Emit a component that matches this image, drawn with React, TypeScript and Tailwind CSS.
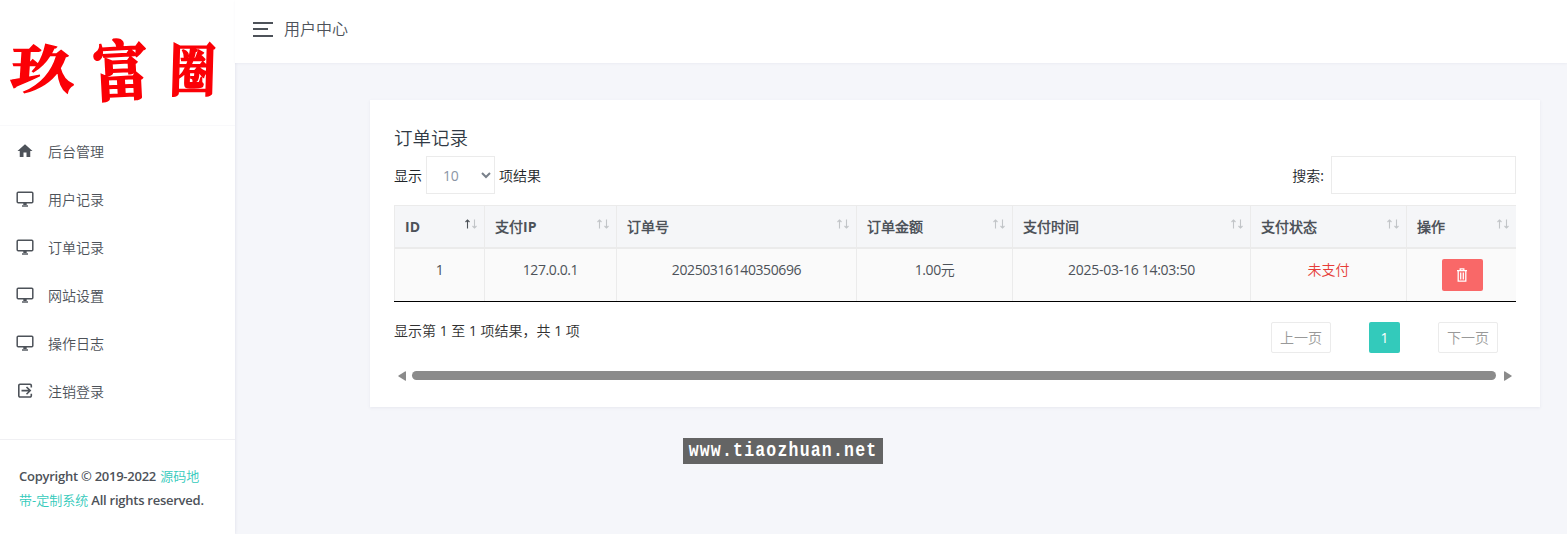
import React from "react";

type IconProps = { className?: string };

const HomeIcon = ({ className }: IconProps) => (
  <svg viewBox="0 0 24 24" className={className} fill="currentColor">
    <path d="M10 20v-6h4v6h5v-8h3L12 3 2 12h3v8z" />
  </svg>
);

const MonitorIcon = ({ className }: IconProps) => (
  <svg viewBox="0 0 18 18" className={className} fill="none" stroke="currentColor" strokeWidth="1.5">
    <rect x="1.2" y="2.2" width="15.6" height="10.6" rx="1" />
    <path d="M9 13v2" strokeWidth="3.4" />
    <path d="M6 16h6" strokeWidth="1.4" />
  </svg>
);

const LogoutIcon = ({ className }: IconProps) => (
  <svg viewBox="0 0 18 18" className={className} fill="none" stroke="currentColor" strokeWidth="1.6">
    <path d="M15.3 5.5V3.4a1.2 1.2 0 0 0-1.2-1.2H4a1.2 1.2 0 0 0-1.2 1.2v10.4A1.2 1.2 0 0 0 4 15h10.1a1.2 1.2 0 0 0 1.2-1.2v-2.1" />
    <path d="M5.5 8.6h8.7M10.5 5l3.7 3.6-3.7 3.6" />
  </svg>
);

const TrashIcon = ({ className }: IconProps) => (
  <svg viewBox="0 0 12 14" className={className} fill="none" stroke="currentColor" strokeWidth="1.3">
    <path d="M1 2.6h10M4.2 2.4V.9h3.6v1.5M2.2 2.8v10.3h7.6V2.8M4.7 4.5v7M7.3 4.5v7" />
  </svg>
);

const SortIcon = ({ active = false }: { active?: boolean }) => (
  <svg viewBox="0 0 14 10" className="mt-[-5px] h-[10px] w-[14px] text-[#4d5259]" fill="none" stroke="currentColor">
    <path d="M3.5 9.5V1M1.5 3l2-2 2 2" strokeWidth="1.1" opacity={active ? 1 : 0.3} />
    <path d="M10.5.5V9M8.5 7l2 2 2-2" strokeWidth="1.1" opacity="0.3" />
  </svg>
);

const menu = [
  { label: "后台管理", Icon: HomeIcon },
  { label: "用户记录", Icon: MonitorIcon },
  { label: "订单记录", Icon: MonitorIcon },
  { label: "网站设置", Icon: MonitorIcon },
  { label: "操作日志", Icon: MonitorIcon },
  { label: "注销登录", Icon: LogoutIcon },
];

const columns = ["ID", "支付IP", "订单号", "订单金额", "支付时间", "支付状态", "操作"];

const tableGrid = "grid grid-cols-[90px_132px_240px_156px_238px_156px_110px]";
const cell = "border-l border-[#ebebeb] flex";

export default function App() {
  return (
    <div className="flex h-[534px] w-[1567px] overflow-hidden bg-[#f5f6fa] font-['Open_Sans','Noto_Sans_CJK_SC_DemiLight','Noto_Sans_CJK_SC',sans-serif] text-[14px] leading-[21px] text-[#4d5259]">
      <aside className="flex w-[235px] shrink-0 flex-col bg-white shadow-[0_0_3px_rgba(90,90,130,0.16)]">
        <div className="flex h-[126px] items-center border-b border-[#f9f9fb] pl-[11px] pt-[6px] font-['Noto_Serif_CJK_SC','Noto_Sans_CJK_SC',serif] text-[64px] font-bold leading-[70px] text-[#fb0006] [-webkit-text-stroke:2px_#fb0006]">
          <span className="block w-[80px] -skew-x-3 scale-y-[0.8]">玖</span>
          <span className="block w-[80px] -translate-x-1 -rotate-3 scale-x-[0.86] scale-y-[1.02]">富</span>
          <span className="block w-[64px] -translate-x-[10px] -skew-x-2 scale-x-[0.72] scale-y-[0.9]">圈</span>
        </div>
        <nav className="flex flex-col pt-[1px]">
          {menu.map(({ label, Icon }) => (
            <div key={label} className="flex h-12 items-center pl-4">
              <Icon className="h-[18px] w-[18px]" />
              <span className="ml-[14px]">{label}</span>
            </div>
          ))}
        </nav>
        <div className="mt-6 border-t border-[#f0f0f3] pl-[19px] pt-6 text-[13px] font-semibold leading-6 tracking-[-0.25px]">
          <div className="whitespace-nowrap">
            Copyright © 2019-2022 <span className="ml-px font-normal tracking-normal text-[#33cabb]">源码地</span>
          </div>
          <div className="whitespace-nowrap">
            <span className="font-normal tracking-normal text-[#33cabb]">带-定制系统</span> All rights reserved.
          </div>
        </div>
      </aside>

      <div className="flex flex-1 flex-col">
        <header className="flex h-[63px] shrink-0 items-center bg-white pb-[5px] pl-[18px] shadow-[0_1px_2px_rgba(90,90,130,0.06)]">
          <div className="flex flex-col gap-[4.5px]">
            <span className="h-[2px] w-[20px] bg-[#4d5259]" />
            <span className="h-[2px] w-[15px] bg-[#4d5259]" />
            <span className="h-[2px] w-[20px] bg-[#4d5259]" />
          </div>
          <span className="ml-[11px] text-[16px]">用户中心</span>
        </header>

        <main className="pl-[135px] pt-[37px]">
          <section className="h-[307px] w-[1170px] bg-white px-6 pt-[25px] shadow-[0_1px_3px_rgba(90,90,130,0.09)]">
            <h4 className="h-[31px] text-[18.5px] leading-[25px] text-[#313944]">订单记录</h4>
            <div className="flex h-[38px] items-center justify-between text-[#212529]">
              <div className="flex items-center">
                <span>显示</span>
                <div className="ml-1 mr-1 flex h-[38px] w-[69px] items-center justify-between border border-[#ebebeb] pl-4 pr-[3px] text-[#8b95a5]">
                  <span className="tracking-[-0.2px]">10</span>
                  <svg viewBox="0 0 10 7" className="h-[7px] w-[10px]" fill="none" stroke="#79808a" strokeWidth="2">
                    <path d="m1 1 4 4 4-4" />
                  </svg>
                </div>
                <span>项结果</span>
              </div>
              <div className="flex items-center">
                <span>搜索:</span>
                <div className="ml-[7px] h-[38px] w-[185px] border border-[#ebebeb]" />
              </div>
            </div>

            <div className="mt-[11px] border-b border-black">
              <div className={`${tableGrid} h-[44px] border-b-2 border-t border-[#ebebeb] bg-[#f5f6f8] font-bold`}>
                {columns.map((c, i) => (
                  <div key={c} className={`${cell} items-center justify-between pl-[10px] pr-[6px]`}>
                    <span className="pb-px">{c}</span>
                    <SortIcon active={i === 0} />
                  </div>
                ))}
              </div>
              <div className={`${tableGrid} h-[52px] bg-[#fafafa] tracking-[-0.4px]`}>
                <div className={`${cell} justify-center pt-[10px]`}>1</div>
                <div className={`${cell} justify-center pt-[10px]`}>127.0.0.1</div>
                <div className={`${cell} justify-center pt-[10px]`}>20250316140350696</div>
                <div className={`${cell} justify-center pt-[10px]`}>1.00元</div>
                <div className={`${cell} justify-center pt-[10px] tracking-[-0.27px]`}>2025-03-16 14:03:50</div>
                <div className={`${cell} justify-center pt-[10px] tracking-normal text-[#e63c38]`}>未支付</div>
                <div className={`${cell} justify-center pl-px pt-[10px]`}>
                  <button className="flex h-8 w-[41px] items-center justify-center rounded-[2px] bg-[#f96868] text-white">
                    <TrashIcon className="h-[14px] w-[12px]" />
                  </button>
                </div>
              </div>
            </div>

            <div className="flex h-[68px] items-start justify-between text-[#313131]">
              <span className="pt-[18px]">显示第 1 至 1 项结果，共 1 项</span>
              <div className="flex pr-[18px] pt-5">
                <span className="flex h-[31px] w-[60px] items-center justify-center rounded-[2px] border border-[#ebebeb] text-[#999]">上一页</span>
                <span className="ml-[38px] flex h-[31px] w-[31px] items-center justify-center rounded-[2px] bg-[#33cabb] text-white">1</span>
                <span className="ml-[38px] flex h-[31px] w-[60px] items-center justify-center rounded-[2px] border border-[#ebebeb] text-[#999]">下一页</span>
              </div>
            </div>

            <div className="flex h-[11px] items-center pl-1 pr-1">
              <svg viewBox="0 0 8 10" className="h-[10px] w-[8px]" fill="#8b8b8b">
                <path d="M8 .8v8.4q0 1-1 .4L.6 5.6q-.8-.6 0-1.2L7 .4q1-.6 1 .4z" />
              </svg>
              <div className="ml-[6px] h-[9px] w-[1084px] rounded-full bg-[#8b8b8b]" />
              <svg viewBox="0 0 8 10" className="ml-2 h-[10px] w-[8px]" fill="#8b8b8b">
                <path d="M0 .8v8.4q0 1 1 .4l6.4-4q.8-.6 0-1.2L1 .4Q0-.2 0 .8z" />
              </svg>
            </div>
          </section>

          <div className="ml-[313px] mt-[31px] flex h-[26px] w-[200px] items-center justify-center bg-[#646464] font-['Liberation_Mono',monospace] text-[16.5px] font-bold leading-[26px] tracking-[1.2px] text-white">
            <span className="block scale-y-[1.22]">www.tiaozhuan.net</span>
          </div>
        </main>
      </div>
    </div>
  );
}
